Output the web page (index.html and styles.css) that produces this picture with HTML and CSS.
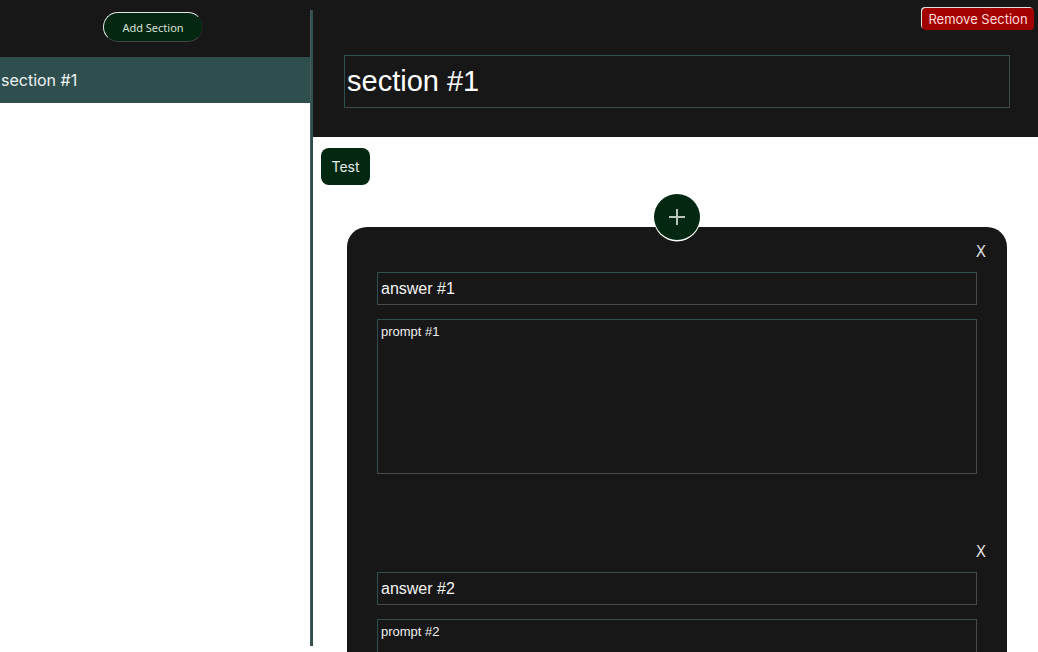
FILE: index.html
```html
<!DOCTYPE html>
<html>
<head>
<meta charset="utf-8">
<link rel="stylesheet" href="styles.css">
</head>
<body>
<div class="app">
  <aside class="sidebar">
    <div class="side-head">
      <button class="add-btn">Add Section</button>
    </div>
    <div class="side-item">section #1</div>
  </aside>
  <div class="divider"></div>
  <main class="main">
    <header class="main-head">
      <button class="remove-btn">Remove Section</button>
      <div class="title-input">section #1</div>
    </header>
    <div class="body">
      <button class="test-btn">Test</button>
      <div class="plus-wrap">
        <div class="plus">
          <svg width="18" height="18" viewBox="0 0 18 18"><path d="M9 1v16M1 9h16" stroke="#b8c4bc" stroke-width="2" fill="none"/></svg>
        </div>
      </div>
      <div class="card">
        <div class="item">
          <div class="x-row"><span class="x">X</span></div>
          <div class="answer">answer #1</div>
          <div class="prompt">prompt #1</div>
        </div>
        <div class="item">
          <div class="x-row"><span class="x">X</span></div>
          <div class="answer">answer #2</div>
          <div class="prompt">prompt #2</div>
        </div>
      </div>
    </div>
  </main>
</div>
</body>
</html>
```
FILE: styles.css
```css
html, body {
  margin: 0;
  padding: 0;
  height: 100%;
  overflow: hidden;
  background: #ffffff;
  font-family: "Inter", "Noto Sans", sans-serif;
}
.app {
  display: flex;
  height: 652px;
}
.sidebar {
  width: 310px;
  flex: none;
  display: flex;
  flex-direction: column;
}
.side-head {
  flex: none;
  height: 57px;
  background: #171717;
  display: flex;
  justify-content: center;
  align-items: flex-start;
  padding-right: 4px;
  box-sizing: border-box;
}
.add-btn {
  margin-top: 12px;
  width: 100px;
  height: 30px;
  border-radius: 15px;
  background: #032812;
  color: #d8e0da;
  font-family: "Noto Sans", sans-serif;
  font-size: 11px;
  border: 1px solid #e8e8e8;
  border-right-color: #222;
  border-bottom-color: #444;
}
.side-item {
  flex: none;
  height: 46px;
  background: #2f4f4f;
  color: #eef2f2;
  font-size: 16px;
  display: flex;
  align-items: center;
  padding-left: 1px;
}
.divider {
  width: 3px;
  flex: none;
  height: 636px;
  border-top: 10px solid #171717;
  background: #2f4f4f;
  box-shadow: inset 1px 0 0 #4a5a5a;
}
.main {
  flex: 1;
  display: flex;
  flex-direction: column;
  min-width: 0;
}
.main-head {
  flex: none;
  background: #171717;
  height: 137px;
  box-sizing: border-box;
  display: flex;
  flex-direction: column;
  padding: 8px 4px 0 31px;
}
.remove-btn {
  align-self: flex-end;
  height: 22px;
  width: 112px;
  padding: 0;
  background: #a30000;
  color: #ffdcdc;
  font-family: "Inter", sans-serif;
  font-size: 13px;
  border: none;
  border-radius: 4px;
  box-shadow: -1px -1px 0 0 #e0e0e0;
}
.title-input {
  margin-top: 25px;
  margin-right: 24px;
  height: 53px;
  box-sizing: border-box;
  border: 1px solid #2f4f4f;
  border-right-color: #3c4a4a;
  border-bottom-color: #3c4a4a;
  color: #ffffff;
  font-family: "Liberation Sans", sans-serif;
  font-size: 29px;
  display: flex;
  align-items: center;
  padding-left: 2px;
}
.body {
  display: flex;
  flex-direction: column;
  align-items: flex-start;
  padding: 11px 0 0 8px;
}
.test-btn {
  width: 49px;
  height: 37px;
  background: #032812;
  color: #e8ece8;
  border: none;
  border-radius: 8px;
  font-family: "Inter", sans-serif;
  font-size: 14px;
  padding: 0;
}
.plus-wrap {
  align-self: stretch;
  display: flex;
  justify-content: center;
  padding-left: 26px;
  padding-right: 31px;
  margin-top: 9px;
  margin-bottom: -13px;
  position: relative;
  z-index: 1;
}
.plus {
  width: 46px;
  height: 46px;
  box-sizing: border-box;
  border-radius: 50%;
  background: #032812;
  display: flex;
  align-items: center;
  justify-content: center;
  box-shadow: 0 1px 0 0.5px #ffffff;
}
.card {
  align-self: stretch;
  margin-left: 26px;
  margin-right: 31px;
  background: #171717;
  border-radius: 20px;
  padding: 18px 30px 40px 30px;
}
.item {
  display: flex;
  flex-direction: column;
}
.item + .item {
  margin-top: 71px;
}
.x-row {
  display: flex;
  justify-content: flex-end;
  margin-right: -9px;
  height: 14px;
}
.x {
  color: #dddddd;
  font-family: "DejaVu Sans", sans-serif;
  font-size: 15px;
  line-height: 14px;
}
.answer {
  margin-top: 13px;
  height: 33px;
  box-sizing: border-box;
  border: 1px solid #2f4f4f;
  border-right-color: #4a4a4a;
  border-bottom-color: #4a4a4a;
  color: #f4f4f4;
  font-family: "Liberation Sans", sans-serif;
  font-size: 16px;
  display: flex;
  align-items: center;
  padding-left: 3px;
}
.prompt {
  margin-top: 14px;
  height: 155px;
  box-sizing: border-box;
  border: 1px solid #2f4f4f;
  border-right-color: #4a4a4a;
  border-bottom-color: #4a4a4a;
  color: #eeeeee;
  font-family: "Liberation Sans", sans-serif;
  font-size: 13px;
  padding: 4px 3px;
}
```
